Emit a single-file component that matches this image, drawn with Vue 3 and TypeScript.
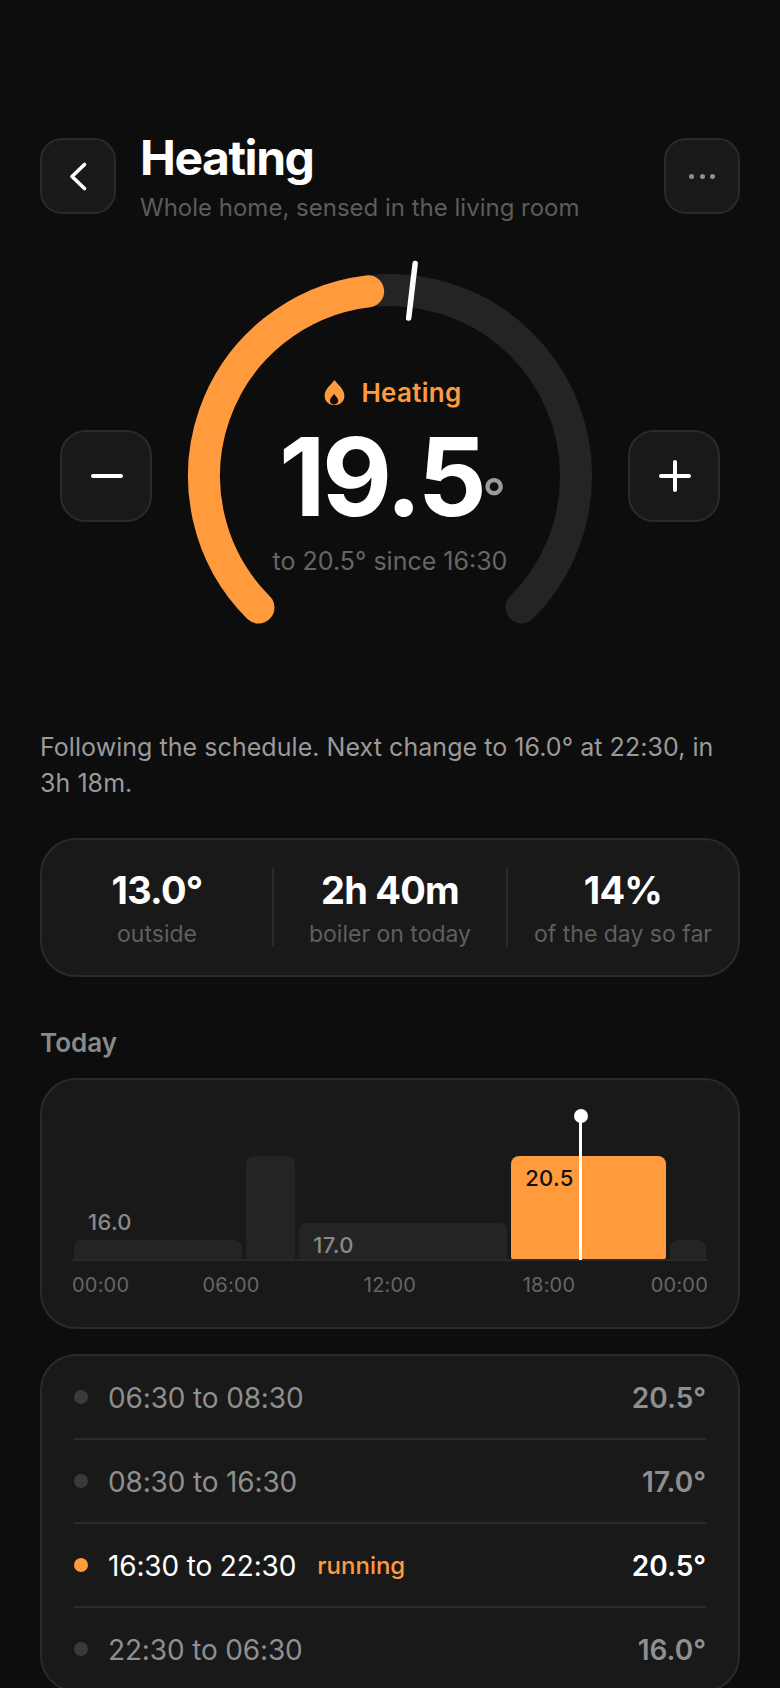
<template>
  <div class="page">
    <header class="top">
      <button class="icon-btn">
        <svg width="32" height="32" viewBox="0 0 32 32" fill="none">
          <path d="M22.5 4.5 10 16.5 22.5 28.5" stroke="#fff" stroke-width="3.6" stroke-linecap="round" stroke-linejoin="round" />
        </svg>
      </button>
      <div class="title-block">
        <h1 class="title">Heating</h1>
        <p class="subtitle">Whole home, sensed in the living room</p>
      </div>
      <button class="icon-btn more">
        <i></i><i></i><i></i>
      </button>
    </header>

    <section class="control">
      <button class="step-btn">
        <svg width="32" height="32" viewBox="0 0 32 32" fill="none">
          <path d="M3 16H31" stroke="#fff" stroke-width="4" stroke-linecap="round" />
        </svg>
      </button>
      <div class="dial">
        <svg width="440" height="440" viewBox="0 0 440 440" fill="none">
          <path :d="arc(-135, 135)" stroke="#242424" stroke-width="32" stroke-linecap="round" />
          <path :d="arc(-135, angleOf(current))" stroke="#ff9a3d" stroke-width="32" stroke-linecap="round" />
          <line :x1="tick.x1" :y1="tick.y1" :x2="tick.x2" :y2="tick.y2" stroke="#fff" stroke-width="5.5" stroke-linecap="round" />
        </svg>
        <div class="readout">
          <div class="mode">
            <svg width="21" height="25" viewBox="0 0 20 24">
              <path d="M10 0C12.5 3.8 19.5 8.5 19.5 15 19.5 20.5 15.3 24 10 24 4.7 24 .5 20.5 .5 15 .5 8.5 7.5 3.8 10 0Z" fill="#ff9a3d" />
              <path d="M9.6 13.5C11 15.6 13.6 17.4 13.6 20 13.6 22.2 11.8 23.5 9.6 23.5 7.4 23.5 5.6 22.2 5.6 20 5.6 17.4 8.2 15.6 9.6 13.5Z" fill="#0d0d0d" />
            </svg>
            <span>Heating</span>
          </div>
          <div class="temp">{{ current }}<span class="deg">°</span></div>
          <div class="since">to {{ target.toFixed(1) }}° since 16:30</div>
        </div>
      </div>
      <button class="step-btn">
        <svg width="32" height="32" viewBox="0 0 32 32" fill="none">
          <path d="M3 16H31M17 2V30" stroke="#fff" stroke-width="4" stroke-linecap="round" />
        </svg>
      </button>
    </section>

    <p class="status">Following the schedule. Next change to 16.0° at 22:30, in 3h 18m.</p>

    <section class="card stats">
      <div v-for="s in stats" :key="s.label" class="stat">
        <div class="stat-value">{{ s.value }}</div>
        <div class="stat-label">{{ s.label }}</div>
      </div>
    </section>

    <h2 class="section-title">Today</h2>

    <section class="card chart">
      <div class="plot">
        <div v-for="b in bars" :key="b.hours + '-' + b.height" class="seg" :style="{ width: (b.hours / 24) * 100 + '%' }">
          <span v-if="b.above" class="bar-label above">{{ b.label }}</span>
          <div class="bar" :class="{ on: b.on }" :style="{ height: b.height + 'px' }">
            <span v-if="b.label && !b.above" class="bar-label">{{ b.label }}</span>
          </div>
        </div>
        <div class="now" :style="{ left: (nowHour / 24) * 100 + '%' }"></div>
      </div>
      <div class="axis">
        <div v-for="t in ticks" :key="t.key" class="axis-tick" :class="t.align">
          <span>{{ t.text }}</span>
        </div>
      </div>
    </section>

    <section class="card schedule">
      <div v-for="r in rows" :key="r.time" class="row" :class="{ active: r.active }">
        <span class="dot"></span>
        <span class="time">{{ r.time }}</span>
        <span v-if="r.active" class="running">running</span>
        <span class="row-temp">{{ r.temp }}</span>
      </div>
    </section>
  </div>
</template>

<script setup lang="ts">
const current = 19.5;
const target = 20.5;
const nowHour = 19.2;

const CX = 220;
const CY = 220;
const R = 186;

// the dial covers 10 to 30 degrees over 270 of arc
const angleOf = (t: number) => -135 + ((t - 10) / 20) * 270;

const point = (deg: number, r: number) => {
  const a = (deg * Math.PI) / 180;
  return { x: CX + r * Math.sin(a), y: CY - r * Math.cos(a) };
};

const arc = (from: number, to: number) => {
  const a = point(from, R);
  const b = point(to, R);
  const large = to - from > 180 ? 1 : 0;
  return `M${a.x} ${a.y}A${R} ${R} 0 ${large} 1 ${b.x} ${b.y}`;
};

const tickInner = point(angleOf(target), 159);
const tickOuter = point(angleOf(target), 214);
const tick = { x1: tickInner.x, y1: tickInner.y, x2: tickOuter.x, y2: tickOuter.y };

const stats = [
  { value: "13.0°", label: "outside" },
  { value: "2h 40m", label: "boiler on today" },
  { value: "14%", label: "of the day so far" },
];

const bars = [
  { hours: 6.5, height: 19, label: "16.0", above: true, on: false },
  { hours: 2, height: 103, label: "", above: false, on: false },
  { hours: 8, height: 36, label: "17.0", above: false, on: false },
  { hours: 6, height: 103, label: "20.5", above: false, on: true },
  { hours: 1.5, height: 19, label: "", above: false, on: false },
];

const ticks = [
  { key: "a", text: "00:00", align: "left" },
  { key: "b", text: "06:00", align: "mid" },
  { key: "c", text: "12:00", align: "mid" },
  { key: "d", text: "18:00", align: "mid" },
  { key: "e", text: "00:00", align: "right" },
];

const rows = [
  { time: "06:30 to 08:30", temp: "20.5°", active: false },
  { time: "08:30 to 16:30", temp: "17.0°", active: false },
  { time: "16:30 to 22:30", temp: "20.5°", active: true },
  { time: "22:30 to 06:30", temp: "16.0°", active: false },
];
</script>

<style>
html,
body {
  margin: 0;
  background: #0d0d0d;
}
</style>

<style scoped>
.page {
  box-sizing: border-box;
  width: 780px;
  height: 1688px;
  overflow: hidden;
  padding: 138px 40px 0;
  background: #0d0d0d;
  color: #fff;
  font-family: Inter, "Liberation Sans", sans-serif;
}

.top {
  display: flex;
  height: 76px;
}

.icon-btn,
.step-btn {
  display: flex;
  align-items: center;
  justify-content: center;
  flex: none;
  box-sizing: border-box;
  padding: 0;
  background: #191919;
  border: 2px solid #2a2a2a;
}

.icon-btn {
  width: 76px;
  height: 76px;
  border-radius: 22px;
}

.step-btn {
  width: 92px;
  height: 92px;
  border-radius: 26px;
}

.step-btn svg {
  overflow: visible;
}

.more {
  gap: 5.5px;
}

.more i {
  width: 5px;
  height: 5px;
  border-radius: 50%;
  background: #8f8f8f;
}

.title-block {
  flex: 1;
  margin: -4px 0 0 24px;
}

.title {
  margin: 0;
  font-size: 48px;
  line-height: 48px;
  font-weight: 700;
  letter-spacing: -1.44px;
}

.subtitle {
  margin: 8px 0 0;
  font-size: 24px;
  line-height: 36px;
  color: #5c5c5c;
}

.control {
  display: flex;
  align-items: center;
  justify-content: space-between;
  margin-top: 42px;
  padding: 0 20px;
}

.dial {
  position: relative;
  width: 440px;
  height: 440px;
}

.dial > svg {
  display: block;
}

.readout {
  position: absolute;
  inset: 0;
  display: flex;
  flex-direction: column;
  align-items: center;
  padding-top: 120.5px;
  box-sizing: border-box;
}

.mode {
  display: flex;
  align-items: center;
  gap: 16px;
  height: 32px;
  padding-left: 6px;
  font-size: 26px;
  font-weight: 600;
  letter-spacing: 0.3px;
  color: #ff9a3d;
}

.temp {
  margin-top: 14.5px;
  padding-left: 5px;
  font-size: 108px;
  line-height: 108px;
  font-weight: 700;
  letter-spacing: -3.4px;
}

.deg {
  margin-left: -1px;
  font-size: 52px;
  line-height: 0;
  font-weight: 500;
  color: #9a9a9a;
  letter-spacing: 0;
}

.since {
  margin-top: 14px;
  font-size: 25px;
  line-height: 32px;
  color: #666;
}

.status {
  margin: 33px 0 0;
  font-size: 25px;
  line-height: 36px;
  letter-spacing: 0.05px;
  color: #9a9a9a;
}

.card {
  box-sizing: border-box;
  background: #191919;
  border: 2px solid #2a2a2a;
  border-radius: 36px;
}

.stats {
  display: grid;
  grid-template-columns: 230px 234px 232px;
  margin-top: 37px;
  padding: 28px 0;
}

.stat {
  text-align: center;
}

.stat + .stat {
  border-left: 2px solid #2a2a2a;
}

.stat-value {
  font-size: 38px;
  line-height: 44px;
  font-weight: 700;
  letter-spacing: -0.8px;
}

.stat-label {
  margin-top: 9px;
  font-size: 23px;
  line-height: 26px;
  color: #5f5f5f;
}

.section-title {
  margin: 51px 0 0;
  font-size: 26px;
  line-height: 30px;
  font-weight: 600;
  color: #8a8a8a;
}

.chart {
  margin-top: 20px;
  padding: 30px 30px 29px;
}

.plot {
  position: relative;
  display: flex;
  align-items: flex-end;
  height: 149px;
  border-bottom: 2px solid #2a2a2a;
}

.seg {
  box-sizing: border-box;
  padding: 0 2px;
}

.bar {
  box-sizing: border-box;
  padding: 9px 0 0 14px;
  background: #242424;
  border-radius: 8px 8px 2px 2px;
}

.bar.on {
  background: #ff9a3d;
}

.bar-label {
  display: block;
  font-size: 22px;
  line-height: 26px;
  font-weight: 500;
  letter-spacing: 0.3px;
  color: #8a8a8a;
}

.bar.on .bar-label {
  color: #111;
}

.bar-label.above {
  margin: 0 0 5px 14px;
}

.now {
  position: absolute;
  top: 6px;
  bottom: -1px;
  width: 3px;
  margin-left: -1.5px;
  background: #fff;
}

.now::before {
  content: "";
  position: absolute;
  top: -7px;
  left: -5.5px;
  width: 14px;
  height: 14px;
  border-radius: 50%;
  background: #fff;
}

.axis {
  display: flex;
  justify-content: space-between;
  margin-top: 11px;
  height: 26px;
}

.axis-tick {
  display: flex;
  width: 0;
  font-size: 20px;
  line-height: 26px;
  letter-spacing: 0.2px;
  white-space: nowrap;
  color: #666;
}

.axis-tick.mid {
  justify-content: center;
}

.axis-tick.right {
  justify-content: flex-end;
}

.schedule {
  margin-top: 25px;
  padding: 0 32px;
}

.row {
  display: flex;
  align-items: center;
  height: 82px;
  font-size: 28px;
  color: #8f8f8f;
}

.row + .row {
  border-top: 2px solid #2a2a2a;
}

.dot {
  flex: none;
  width: 14px;
  height: 14px;
  margin-right: 20px;
  border-radius: 50%;
  background: #3a3a3a;
}

.time {
  padding-top: 2px;
  letter-spacing: -0.15px;
}

.active {
  color: #fff;
}

.active .dot {
  background: #ff9a3d;
}

.running {
  margin-left: 21px;
  padding-top: 1px;
  font-size: 24px;
  font-weight: 500;
  color: #ff9a3d;
}

.row-temp {
  margin-left: auto;
  padding-top: 2px;
  font-weight: 600;
}
</style>
